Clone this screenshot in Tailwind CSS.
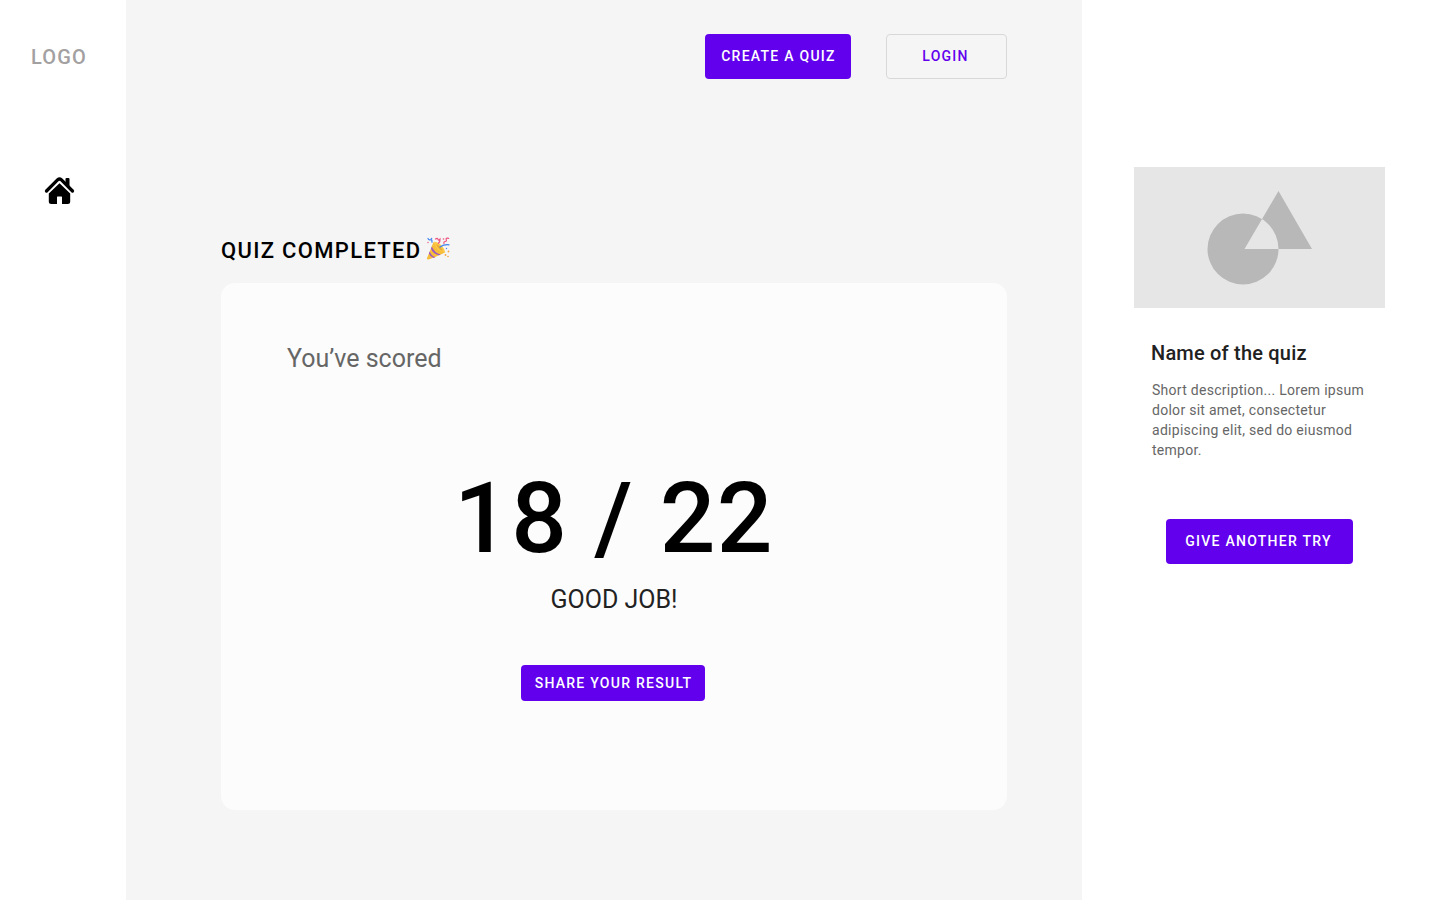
<!DOCTYPE html>
<html lang="en">
<head>
<meta charset="utf-8">
<meta name="viewport" content="width=device-width, initial-scale=1">
<title>Quiz completed</title>
<script src="https://cdn.jsdelivr.net/npm/@tailwindcss/browser@4"></script>
</head>
<body class="flex min-h-screen bg-white font-[Roboto,sans-serif] text-black">
  <nav class="flex w-[126px] shrink-0 flex-col items-center pr-2 pt-[43px]">
    <a href="#" class="text-xl leading-7 font-medium tracking-[0.06em] text-[#a3a0a1]">LOGO</a>
    <a href="#" aria-label="Home" class="mt-[103px]">
      <svg class="h-8 w-8" viewBox="0 0 32 32">
        <path d="M22.500 5q0-1 1-1h2q1 0 1 1v8l-4-3.500z"/>
        <path d="M3.500 17 14.800 5.700Q16.500 4.100 18.200 5.700L29.500 17" fill="none" stroke="#000" stroke-width="3.300" stroke-linecap="round" stroke-linejoin="round"/>
        <path d="M16.500 9.300 27.200 19.500V27.500q0 2.500-2.500 2.500H19v-7q0-.5-.5-.5h-4q-.5 0-.5.500v7H8.300Q5.800 30 5.800 27.500v-8z"/>
      </svg>
    </a>
  </nav>

  <main class="min-w-0 flex-1 bg-[#f5f5f5] pt-[34px] pr-[75px] pb-[90px] pl-[95px]">
    <header class="flex justify-end gap-[35px]">
      <button type="button" class="h-[45px] w-[146px] rounded bg-[#6200ee] pb-px pl-px text-sm font-medium tracking-[0.09em] text-white">CREATE A QUIZ</button>
      <button type="button" class="h-[45px] w-[121px] rounded border border-[#d8d8d8] pr-0.5 pb-px text-sm font-medium tracking-[0.09em] text-[#6200ee]">LOGIN</button>
    </header>

    <div class="mt-[156px] flex h-8 items-center gap-1">
      <h1 class="text-[22px] leading-8 font-medium tracking-[0.06em]">QUIZ COMPLETED</h1>
      <svg class="mb-1 h-6 w-6" viewBox="0 0 24 24" role="img" aria-label="Party popper">
        <path d="M7.500 5C5.500 10.500 3 16.500 1 21q-.4 2 1.500 1.500C8 20.500 14 18 19 15.500Z" fill="#f6bd3a"/>
        <path d="M5.800 9.500q2.500 6.500 8.900 8l-1.700.8Q6.500 16.500 5 11.500zM3.700 14.500q1.700 4.700 5.600 5.700l-1.600.7Q4 19.700 2.900 16.300z" fill="#9a55c8"/>
        <path d="M8 4.800q4.300.2 7.500 3.700 3 3 3.700 7-6-1.200-8.400-4.200Q8 8 8 4.800Z" fill="#fcca48"/>
        <path d="M10 7q4.800 2.200 7 7-4.600-1.400-7-7Z" fill="#e9a734"/>
        <g fill="none" stroke-linecap="round" stroke-width="1.200">
          <path d="M2 1.500q1 2 2.500 1.200T6 5.200M14 10q4-2.700 9-2.200" stroke="#3d83ee"/>
          <path d="M9.500 2q2-1.500 2.500.3t2-.2q.3 2.500-1.500 4.200M18 6.500q-.5-2 1.200-2t1-2 2.500-1.200" stroke="#ee527e"/>
        </g>
        <g fill="#ee527e"><circle cx="2" cy="5.500" r=".7"/><circle cx="17.500" cy="2" r=".8"/></g>
        <g fill="#f5a640"><circle cx="19.500" cy="18" r=".9"/><circle cx="22.500" cy="14.500" r=".9"/><circle cx="22" cy="19.500" r=".8"/></g>
        <g fill="#4c8df0"><circle cx="5.500" cy="1.500" r=".8"/><circle cx="20.500" cy="11.500" r=".7"/></g>
      </svg>
    </div>

    <section class="mt-4 flex min-h-[527px] flex-col items-center rounded-[14px] bg-[#fcfcfc] pt-[60px] pb-[109px]">
      <p class="self-start pl-[66px] text-[25px] leading-8 text-[#666]">You’ve scored</p>
      <p class="mt-[88px] text-[98px] leading-[112px] font-medium tracking-[0.015em]">18 / 22</p>
      <p class="mt-[9px] text-[25px] leading-8 text-[#222]">GOOD JOB!</p>
      <button type="button" class="mt-[49px] mr-0.5 h-9 w-[184px] rounded bg-[#6200ee] pl-px text-sm font-medium tracking-[0.09em] text-white">SHARE YOUR RESULT</button>
    </section>
  </main>

  <aside class="w-[358px] shrink-0 pt-[167px] pr-[55px] pl-[52px]">
    <svg class="h-[141px] w-full bg-[#e6e6e6]" viewBox="0 0 251 141" role="img" aria-label="Quiz cover">
      <path fill="#b8b8b8" fill-rule="evenodd" d="M73.500 82a35.500 35.500 0 1 1 71 0a35.500 35.500 0 1 1-71 0zM144.500 24 178 82H110.500z"/>
    </svg>
    <div class="pt-[31px] pl-[17px]">
      <h2 class="text-xl leading-7 font-medium tracking-[0.01em] text-[#212121]">Name of the quiz</h2>
      <p class="mt-[13px] pl-px text-sm leading-5 tracking-[0.02em] text-[#666]">Short description... Lorem ipsum dolor sit amet, consectetur adipiscing elit, sed do eiusmod tempor.</p>
    </div>
    <button type="button" class="mt-[59px] ml-8 h-[45px] w-[187px] rounded bg-[#6200ee] pr-0.5 pb-px text-sm font-medium tracking-[0.09em] text-white">GIVE ANOTHER TRY</button>
  </aside>
</body>
</html>
